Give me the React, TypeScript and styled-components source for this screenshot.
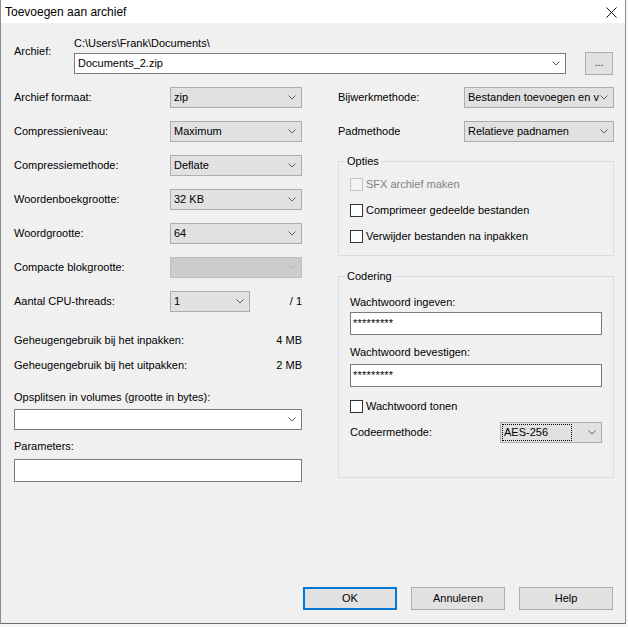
import styled, { createGlobalStyle } from "styled-components";

const GlobalStyle = createGlobalStyle`
  html, body {
    margin: 0;
    padding: 0;
    background: #f7f7f7;
  }
  body {
    font-family: "Liberation Sans", Arial, sans-serif;
    font-size: 11px;
    color: #000;
  }
  * {
    box-sizing: border-box;
  }
`;

const Window = styled.div`
  width: 626px;
  height: 624px;
  display: flex;
  flex-direction: column;
  background: #f0f0f0;
  border: 1px solid #8c8c8c;
  border-top: none;
  border-bottom-color: #6e6e6e;
  box-shadow: 0 1px 0 #b4b4b4;
`;

const TitleBar = styled.div`
  height: 23px;
  display: flex;
  align-items: center;
  justify-content: space-between;
  background: #fff;
  padding: 0 8px 0 4px;
`;

const TitleText = styled.span`
  font-size: 12px;
  line-height: 14px;
`;

const CloseIcon = styled.svg`
  display: block;
  margin-top: 1px;
`;

const Body = styled.div`
  flex: 1;
  display: flex;
  flex-direction: column;
  padding: 14px 11px 13px 13px;
`;

const ArchiveRow = styled.div`
  display: flex;
  align-items: flex-start;
`;

const ArchiveLabel = styled.div`
  width: 60px;
  margin-top: 8px;
  line-height: 13px;
`;

const ArchiveColumn = styled.div`
  display: flex;
  flex-direction: column;
`;

const PathText = styled.div`
  line-height: 13px;
  margin-bottom: 2px;
`;

const ArchiveInputs = styled.div`
  display: flex;
  align-items: center;
  gap: 19px;
`;

const BrowseButton = styled.div`
  width: 28px;
  height: 23px;
  display: flex;
  align-items: center;
  justify-content: center;
  padding-bottom: 2px;
  background: #e1e1e1;
  border: 1px solid #adadad;
  font-size: 10px;
`;

const Columns = styled.div`
  display: grid;
  grid-template-columns: 288px 276px;
  column-gap: 36px;
  margin-top: 12px;
`;

const Column = styled.div`
  display: flex;
  flex-direction: column;
`;

const SettingsGrid = styled.div<{ $label: number }>`
  display: grid;
  grid-template-columns: ${(p) => p.$label}px auto;
  grid-auto-rows: 21px;
  row-gap: 13px;
  align-items: center;
`;

const Label = styled.span`
  line-height: 13px;
  white-space: nowrap;
`;

type ComboKind = "list" | "edit" | "disabled";

const ComboBox = styled.div<{ $width: number; $kind: ComboKind }>`
  width: ${(p) => p.$width}px;
  height: 21px;
  display: flex;
  align-items: center;
  background: ${(p) =>
    p.$kind === "edit" ? "#fff" : p.$kind === "disabled" ? "#cccccc" : "#e1e1e1"};
  border: 1px solid
    ${(p) =>
      p.$kind === "edit" ? "#7a7a7a" : p.$kind === "disabled" ? "#bfbfbf" : "#adadad"};
`;

const ComboValue = styled.span`
  flex: 1;
  min-width: 0;
  padding-left: 3px;
  line-height: 13px;
  white-space: nowrap;
`;

const FocusValue = styled.span`
  flex: 1;
  align-self: stretch;
  display: flex;
  align-items: center;
  margin: 1px 14px 1px 1px;
  padding-left: 1px;
  border: 1px dotted #000;
  line-height: 13px;
`;

const ChevronIcon = styled.svg`
  flex: none;
  margin: 0 5px 0 2px;
  display: block;
`;

const Chevron = ({ color = "#606060" }: { color?: string }) => (
  <ChevronIcon width="8" height="5" viewBox="0 0 8 5">
    <polyline points="0.5,0.5 4,4 7.5,0.5" fill="none" stroke={color} strokeWidth="1" />
  </ChevronIcon>
);

const Combo = ({
  value,
  width,
  kind = "list",
  focused,
}: {
  value: string;
  width: number;
  kind?: ComboKind;
  focused?: boolean;
}) => (
  <ComboBox $width={width} $kind={kind}>
    {focused ? <FocusValue>{value}</FocusValue> : <ComboValue>{value}</ComboValue>}
    <Chevron color={kind === "disabled" ? "#b4b4b4" : "#606060"} />
  </ComboBox>
);

const ThreadCell = styled.div`
  display: flex;
  align-items: center;
  justify-content: space-between;
`;

const MemoryList = styled.div`
  display: flex;
  flex-direction: column;
  gap: 12px;
  margin-top: 22px;
`;

const MemoryRow = styled.div`
  display: flex;
  justify-content: space-between;
  line-height: 13px;
`;

const FieldLabel = styled.div<{ $top?: number; $bottom?: number }>`
  line-height: 13px;
  margin: ${(p) => p.$top ?? 0}px 0 ${(p) => p.$bottom ?? 4}px;
`;

const TextBox = styled.div<{ $width?: number }>`
  width: ${(p) => (p.$width ? `${p.$width}px` : "100%")};
  height: 23px;
  display: flex;
  align-items: center;
  padding-left: 2px;
  background: #fff;
  border: 1px solid #7a7a7a;
  line-height: 13px;
  letter-spacing: 0.2px;
`;

const Group = styled.fieldset<{ $top: number }>`
  margin: ${(p) => p.$top}px 0 0;
  padding: 0;
  border: 1px solid #dcdcdc;
  min-width: 0;
`;

const GroupLegend = styled.legend`
  margin-left: 6px;
  padding: 0 2px;
  line-height: 13px;
`;

const GroupBody = styled.div<{ $top: number; $bottom: number }>`
  display: flex;
  flex-direction: column;
  padding: ${(p) => p.$top}px 11px ${(p) => p.$bottom}px 11px;
`;

const CheckList = styled.div`
  display: flex;
  flex-direction: column;
  gap: 13px;
`;

const CheckRow = styled.div<{ $top?: number }>`
  display: flex;
  align-items: center;
  gap: 3px;
  height: 13px;
  margin-top: ${(p) => p.$top ?? 0}px;
`;

const CheckBox = styled.span<{ $disabled?: boolean }>`
  width: 13px;
  height: 13px;
  flex: none;
  background: ${(p) => (p.$disabled ? "#f4f4f4" : "#fff")};
  border: 1px solid ${(p) => (p.$disabled ? "#c4c4c4" : "#333")};
`;

const CheckText = styled.span<{ $disabled?: boolean }>`
  line-height: 13px;
  color: ${(p) => (p.$disabled ? "#838383" : "#000")};
`;

const MethodRow = styled.div`
  display: grid;
  grid-template-columns: 150px 102px;
  align-items: center;
  margin-top: 9px;
`;

const ButtonBar = styled.div`
  margin-top: auto;
  display: flex;
  justify-content: flex-end;
  gap: 14px;
  padding-right: 1px;
`;

const DialogButton = styled.div<{ $primary?: boolean }>`
  width: 94px;
  height: 23px;
  display: flex;
  align-items: center;
  justify-content: center;
  background: #e1e1e1;
  border: ${(p) => (p.$primary ? "2px solid #0078d7" : "1px solid #adadad")};
  line-height: 13px;
`;

const Check = ({ label, disabled, top }: { label: string; disabled?: boolean; top?: number }) => (
  <CheckRow $top={top}>
    <CheckBox $disabled={disabled} />
    <CheckText $disabled={disabled}>{label}</CheckText>
  </CheckRow>
);

export default function App() {
  return (
    <>
      <GlobalStyle />
      <Window>
        <TitleBar>
          <TitleText>Toevoegen aan archief</TitleText>
          <CloseIcon width="11" height="11" viewBox="0 0 11 11">
            <path d="M0.5 0.5 L10.5 10.5 M10.5 0.5 L0.5 10.5" stroke="#111" strokeWidth="1" />
          </CloseIcon>
        </TitleBar>

        <Body>
          <ArchiveRow>
            <ArchiveLabel>Archief:</ArchiveLabel>
            <ArchiveColumn>
              <PathText>C:\Users\Frank\Documents\</PathText>
              <ArchiveInputs>
                <Combo value="Documents_2.zip" width={492} kind="edit" />
                <BrowseButton>...</BrowseButton>
              </ArchiveInputs>
            </ArchiveColumn>
          </ArchiveRow>

          <Columns>
            <Column>
              <SettingsGrid $label={156}>
                <Label>Archief formaat:</Label>
                <Combo value="zip" width={132} />
                <Label>Compressieniveau:</Label>
                <Combo value="Maximum" width={132} />
                <Label>Compressiemethode:</Label>
                <Combo value="Deflate" width={132} />
                <Label>Woordenboekgrootte:</Label>
                <Combo value="32 KB" width={132} />
                <Label>Woordgrootte:</Label>
                <Combo value="64" width={132} />
                <Label>Compacte blokgrootte:</Label>
                <Combo value="" width={132} kind="disabled" />
                <Label>Aantal CPU-threads:</Label>
                <ThreadCell>
                  <Combo value="1" width={80} />
                  <Label>/ 1</Label>
                </ThreadCell>
              </SettingsGrid>

              <MemoryList>
                <MemoryRow>
                  <span>Geheugengebruik bij het inpakken:</span>
                  <span>4 MB</span>
                </MemoryRow>
                <MemoryRow>
                  <span>Geheugengebruik bij het uitpakken:</span>
                  <span>2 MB</span>
                </MemoryRow>
              </MemoryList>

              <FieldLabel $top={19} $bottom={5}>
                Opsplitsen in volumes (grootte in bytes):
              </FieldLabel>
              <Combo value="" width={288} kind="edit" />
              <FieldLabel $top={10} $bottom={6}>
                Parameters:
              </FieldLabel>
              <TextBox />
            </Column>

            <Column>
              <SettingsGrid $label={126}>
                <Label>Bijwerkmethode:</Label>
                <Combo value="Bestanden toevoegen en v" width={150} />
                <Label>Padmethode</Label>
                <Combo value="Relatieve padnamen" width={150} />
              </SettingsGrid>

              <Group $top={13}>
                <GroupLegend>Opties</GroupLegend>
                <GroupBody $top={10} $bottom={12}>
                  <CheckList>
                    <Check label="SFX archief maken" disabled />
                    <Check label="Comprimeer gedeelde bestanden" />
                    <Check label="Verwijder bestanden na inpakken" />
                  </CheckList>
                </GroupBody>
              </Group>

              <Group $top={14}>
                <GroupLegend>Codering</GroupLegend>
                <GroupBody $top={13} $bottom={34}>
                  <FieldLabel $bottom={3}>Wachtwoord ingeven:</FieldLabel>
                  <TextBox $width={252}>*********</TextBox>
                  <FieldLabel $top={11} $bottom={5}>
                    Wachtwoord bevestigen:
                  </FieldLabel>
                  <TextBox $width={252}>*********</TextBox>
                  <Check label="Wachtwoord tonen" top={13} />
                  <MethodRow>
                    <Label>Codeermethode:</Label>
                    <Combo value="AES-256" width={102} focused />
                  </MethodRow>
                </GroupBody>
              </Group>
            </Column>
          </Columns>

          <ButtonBar>
            <DialogButton $primary>OK</DialogButton>
            <DialogButton>Annuleren</DialogButton>
            <DialogButton>Help</DialogButton>
          </ButtonBar>
        </Body>
      </Window>
    </>
  );
}
